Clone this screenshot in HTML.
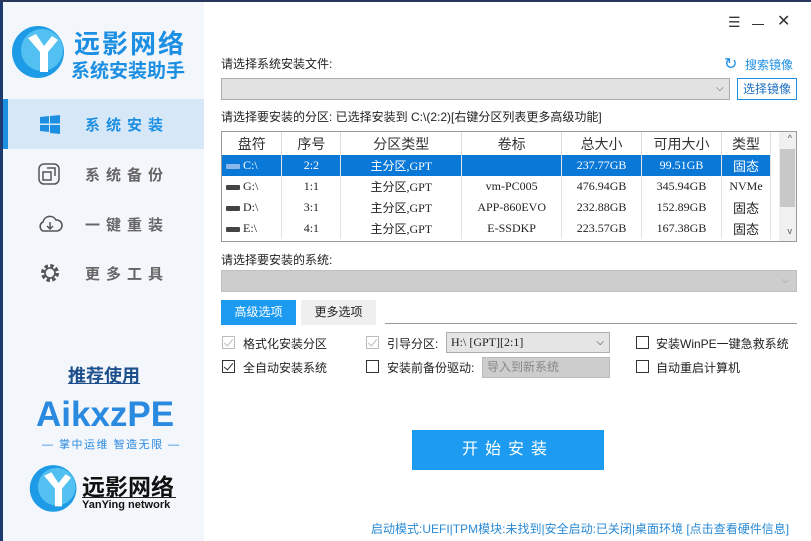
<!DOCTYPE html>
<html><head><meta charset="utf-8"><style>
*{margin:0;padding:0;box-sizing:border-box}
body{width:811px;height:541px;overflow:hidden;background:#fff;font-family:"Liberation Sans","Noto Sans CJK SC",sans-serif;font-size:12px;color:#222;position:relative}
.a{position:absolute}
#side{left:0;top:0;width:204px;height:541px;background:#f3f6fb;border-left:3px solid #1d3a70}
#topb{left:0;top:0;width:811px;height:2px;background:#27365a}
.mi{position:absolute;left:85px;font-size:15px;letter-spacing:6px;color:#666;font-weight:bold}
.cb{position:absolute;width:13px;height:13px;border:1px solid #333;background:#fff}
.cb.d{border-color:#bbb}
.ck::after{content:"";position:absolute;left:3px;top:0px;width:4px;height:8px;border:solid #333;border-width:0 1.5px 1.5px 0;transform:rotate(40deg)}
.cb.d.ck::after{border-color:#bbb}
table{border-collapse:collapse}
td{height:21px;text-align:center;font-size:12px;border-right:1px solid #e3e3e3;font-family:"Liberation Serif","Noto Sans CJK SC",serif}
th{height:23px;font-weight:normal;font-size:14px;border-right:1px solid #ddd;color:#333}
.sel td{background:#0a78d7;color:#fff}
.drv{display:inline-block;width:14px;height:5px;background:#444;border-radius:1px;vertical-align:middle;margin-right:3px}
</style></head><body>
<div class="a" id="side"></div>
<div class="a" id="topb"></div>
<svg class="a" style="left:10px;top:24px" width="58" height="55" viewBox="0 0 58 55"><circle cx="28" cy="28" r="26" fill="#1e9be6"/><circle cx="32" cy="26" r="21" fill="#52c0f0"/><path d="M18 14 L30 28 L30 48 L38 48 L38 28 L48 16 L42 12 L34 22 L26 10 Z" fill="#fff"/></svg>
<div class="a" style="left:74px;top:24px;font-size:26px;font-weight:bold;color:#1c8fe3;letter-spacing:2px">远影网络</div>
<div class="a" style="left:71px;top:56px;font-size:19px;font-weight:bold;color:#1c8fe3">系统安装助手</div>
<div class="a" style="left:8px;top:99px;width:196px;height:50px;background:#d6e8f8"></div>
<div class="a" style="left:3px;top:99px;width:5px;height:50px;background:#1c8fe3"></div>
<svg class="a" style="left:40px;top:115px" width="20" height="19" viewBox="0 0 20 19"><path d="M0 2 L9 1 L9 8.5 L0 8.5Z M10 1 L20 0 L20 8.5 L10 8.5Z M0 10 L9 10 L9 17 L0 16Z M10 10 L20 10 L20 19 L10 18Z" fill="#1c8fe3"/></svg>
<div class="mi" style="top:114px;color:#1c8fe3">系统安装</div>
<svg class="a" style="left:38px;top:163px" width="22" height="22"><rect x="1" y="1" width="20" height="20" rx="5" fill="none" stroke="#555" stroke-width="1.5"/><rect x="5" y="9" width="8" height="8" fill="none" stroke="#555" stroke-width="1.5"/><path d="M9 5 H17 V13" fill="none" stroke="#555" stroke-width="1.5"/></svg>
<div class="mi" style="top:164px">系统备份</div>
<svg class="a" style="left:37px;top:214px" width="26" height="20"><path d="M6 17 A5 5 0 0 1 6 8 A7 7 0 0 1 19 6 A5.5 5.5 0 0 1 20 17 Z" fill="none" stroke="#555" stroke-width="1.6"/><path d="M13 8 V15 M10 12 L13 15 L16 12" fill="none" stroke="#555" stroke-width="1.5"/></svg>
<div class="mi" style="top:214px">一键重装</div>
<svg class="a" style="left:39px;top:262px" width="22" height="22" viewBox="0 0 22 22"><circle cx="11" cy="11" r="7" fill="none" stroke="#555" stroke-width="4" stroke-dasharray="3.3 2.2"/><circle cx="11" cy="11" r="5" fill="none" stroke="#555" stroke-width="1.6"/></svg>
<div class="mi" style="top:263px">更多工具</div>
<div class="a" style="left:68px;top:362px;font-size:18px;font-weight:bold;color:#1d4f8c;text-decoration:underline">推荐使用</div>
<div class="a" style="left:36px;top:395px;font-size:35px;color:#2a8ae0;font-weight:bold;letter-spacing:0px">AikxzPE</div>
<div class="a" style="left:42px;top:436px;font-size:11px;color:#2a8ae0;letter-spacing:1.5px">— 掌中运维 智造无限 —</div>
<svg class="a" style="left:28px;top:463px" width="52" height="50" viewBox="0 0 58 55"><circle cx="28" cy="28" r="26" fill="#1e9be6"/><circle cx="32" cy="26" r="21" fill="#52c0f0"/><path d="M18 14 L30 28 L30 48 L38 48 L38 28 L48 16 L42 12 L34 22 L26 10 Z" fill="#fff"/></svg>
<div class="a" style="left:82px;top:468px;font-size:23px;font-weight:bold;color:#111">远影网络</div>
<div class="a" style="left:82px;top:497px;width:94px;height:1px;background:#222"></div>
<div class="a" style="left:82px;top:499px;font-size:11px;font-weight:bold;color:#111">YanYing network</div>
<div class="a" style="left:728px;top:14px;font-size:14px;color:#333">☰</div>
<div class="a" style="left:752px;top:24px;width:12px;height:1px;background:#333"></div>
<div class="a" style="left:777px;top:11px;font-size:16px;color:#333">✕</div>
<div class="a" style="left:221px;top:55px">请选择系统安装文件:</div>
<div class="a" style="left:724px;top:54px;font-size:16px;color:#1c8fe3">↻</div>
<div class="a" style="left:745px;top:56px;color:#1c8fe3">搜索镜像</div>
<div class="a" style="left:221px;top:78px;width:509px;height:22px;background:#e2e2e2;border:1px solid #acacac"></div>
<div class="a" style="left:716px;top:83px;font-size:10px;color:#555">⌵</div>
<div class="a" style="left:737px;top:78px;width:60px;height:22px;border:1px solid #1c8fe3;background:#fff;color:#1c6fc0;text-align:center;line-height:20px">选择镜像</div>
<div class="a" style="left:221px;top:108px">请选择要安装的分区: 已选择安装到 C:\(2:2)[右键分区列表更多高级功能]</div>
<div class="a" style="left:221px;top:131px;width:576px;height:111px;border:1px solid #9a9a9a;overflow:hidden">
<table style="width:549px">
<tr><th style="width:60px">盘符</th><th style="width:59px">序号</th><th style="width:121px">分区类型</th><th style="width:100px">卷标</th><th style="width:80px">总大小</th><th style="width:80px">可用大小</th><th style="width:49px">类型</th></tr>
<tr class="sel"><td style="text-align:left;padding-left:4px"><span class="drv" style="background:#8ab8e8"></span>C:\</td><td>2:2</td><td>主分区,GPT</td><td></td><td>237.77GB</td><td>99.51GB</td><td style="font-size:13px">固态</td></tr>
<tr><td style="text-align:left;padding-left:4px"><span class="drv"></span>G:\</td><td>1:1</td><td>主分区,GPT</td><td>vm-PC005</td><td>476.94GB</td><td>345.94GB</td><td>NVMe</td></tr>
<tr><td style="text-align:left;padding-left:4px"><span class="drv"></span>D:\</td><td>3:1</td><td>主分区,GPT</td><td>APP-860EVO</td><td>232.88GB</td><td>152.89GB</td><td style="font-size:13px">固态</td></tr>
<tr><td style="text-align:left;padding-left:4px"><span class="drv"></span>E:\</td><td>4:1</td><td>主分区,GPT</td><td>E-SSDKP</td><td>223.57GB</td><td>167.38GB</td><td style="font-size:13px">固态</td></tr>
</table>
<div class="a" style="right:0;top:0;width:17px;height:109px;background:#f0f0f0"></div>
<div class="a" style="right:1px;top:17px;width:15px;height:58px;background:#c8c8c8"></div>
<div class="a" style="right:4px;top:1px;font-size:9px;color:#555">^</div>
<div class="a" style="right:4px;top:94px;font-size:9px;color:#555">v</div>
</div>
<div class="a" style="left:221px;top:251px">请选择要安装的系统:</div>
<div class="a" style="left:221px;top:270px;width:576px;height:22px;background:#cdcdcd;border:1px solid #c0c0c0"></div>
<div class="a" style="left:782px;top:275px;font-size:10px;color:#999">⌵</div>
<div class="a" style="left:221px;top:300px;width:75px;height:25px;background:#1c9bf0;color:#fff;text-align:center;line-height:25px">高级选项</div>
<div class="a" style="left:301px;top:300px;width:75px;height:25px;background:#efefef;text-align:center;line-height:25px">更多选项</div>
<div class="a" style="left:385px;top:323px;width:412px;height:1px;background:#999"></div>
<div class="cb d ck" style="left:222px;top:336px"></div><div class="a" style="left:243px;top:335px">格式化安装分区</div>
<div class="cb d ck" style="left:366px;top:336px"></div><div class="a" style="left:387px;top:335px">引导分区:</div>
<div class="a" style="left:446px;top:332px;width:164px;height:21px;background:#e5e5e5;border:1px solid #adadad;padding-left:4px;line-height:19px;font-family:'Liberation Serif',serif">H:\ [GPT][2:1]<span style="position:absolute;right:5px;font-size:10px">⌵</span></div>
<div class="cb" style="left:636px;top:336px"></div><div class="a" style="left:656px;top:335px">安装WinPE一键急救系统</div>
<div class="cb ck" style="left:222px;top:360px"></div><div class="a" style="left:243px;top:359px">全自动安装系统</div>
<div class="cb" style="left:366px;top:360px"></div><div class="a" style="left:387px;top:359px">安装前备份驱动:</div>
<div class="a" style="left:482px;top:357px;width:128px;height:21px;background:#cdcdcd;border:1px solid #bbb;padding-left:4px;line-height:19px;color:#888">导入到新系统</div>
<div class="cb" style="left:636px;top:360px"></div><div class="a" style="left:656px;top:359px">自动重启计算机</div>
<div class="a" style="left:412px;top:430px;width:192px;height:40px;background:#1c9bf0;color:#fff;font-size:16px;letter-spacing:7px;text-align:center;line-height:40px">开始安装</div>
<div class="a" style="left:371px;top:520px;color:#2a8ad4;font-size:12px">启动模式:UEFI|TPM模块:未找到|安全启动:已关闭|桌面环境 [点击查看硬件信息]</div>
</body></html>
